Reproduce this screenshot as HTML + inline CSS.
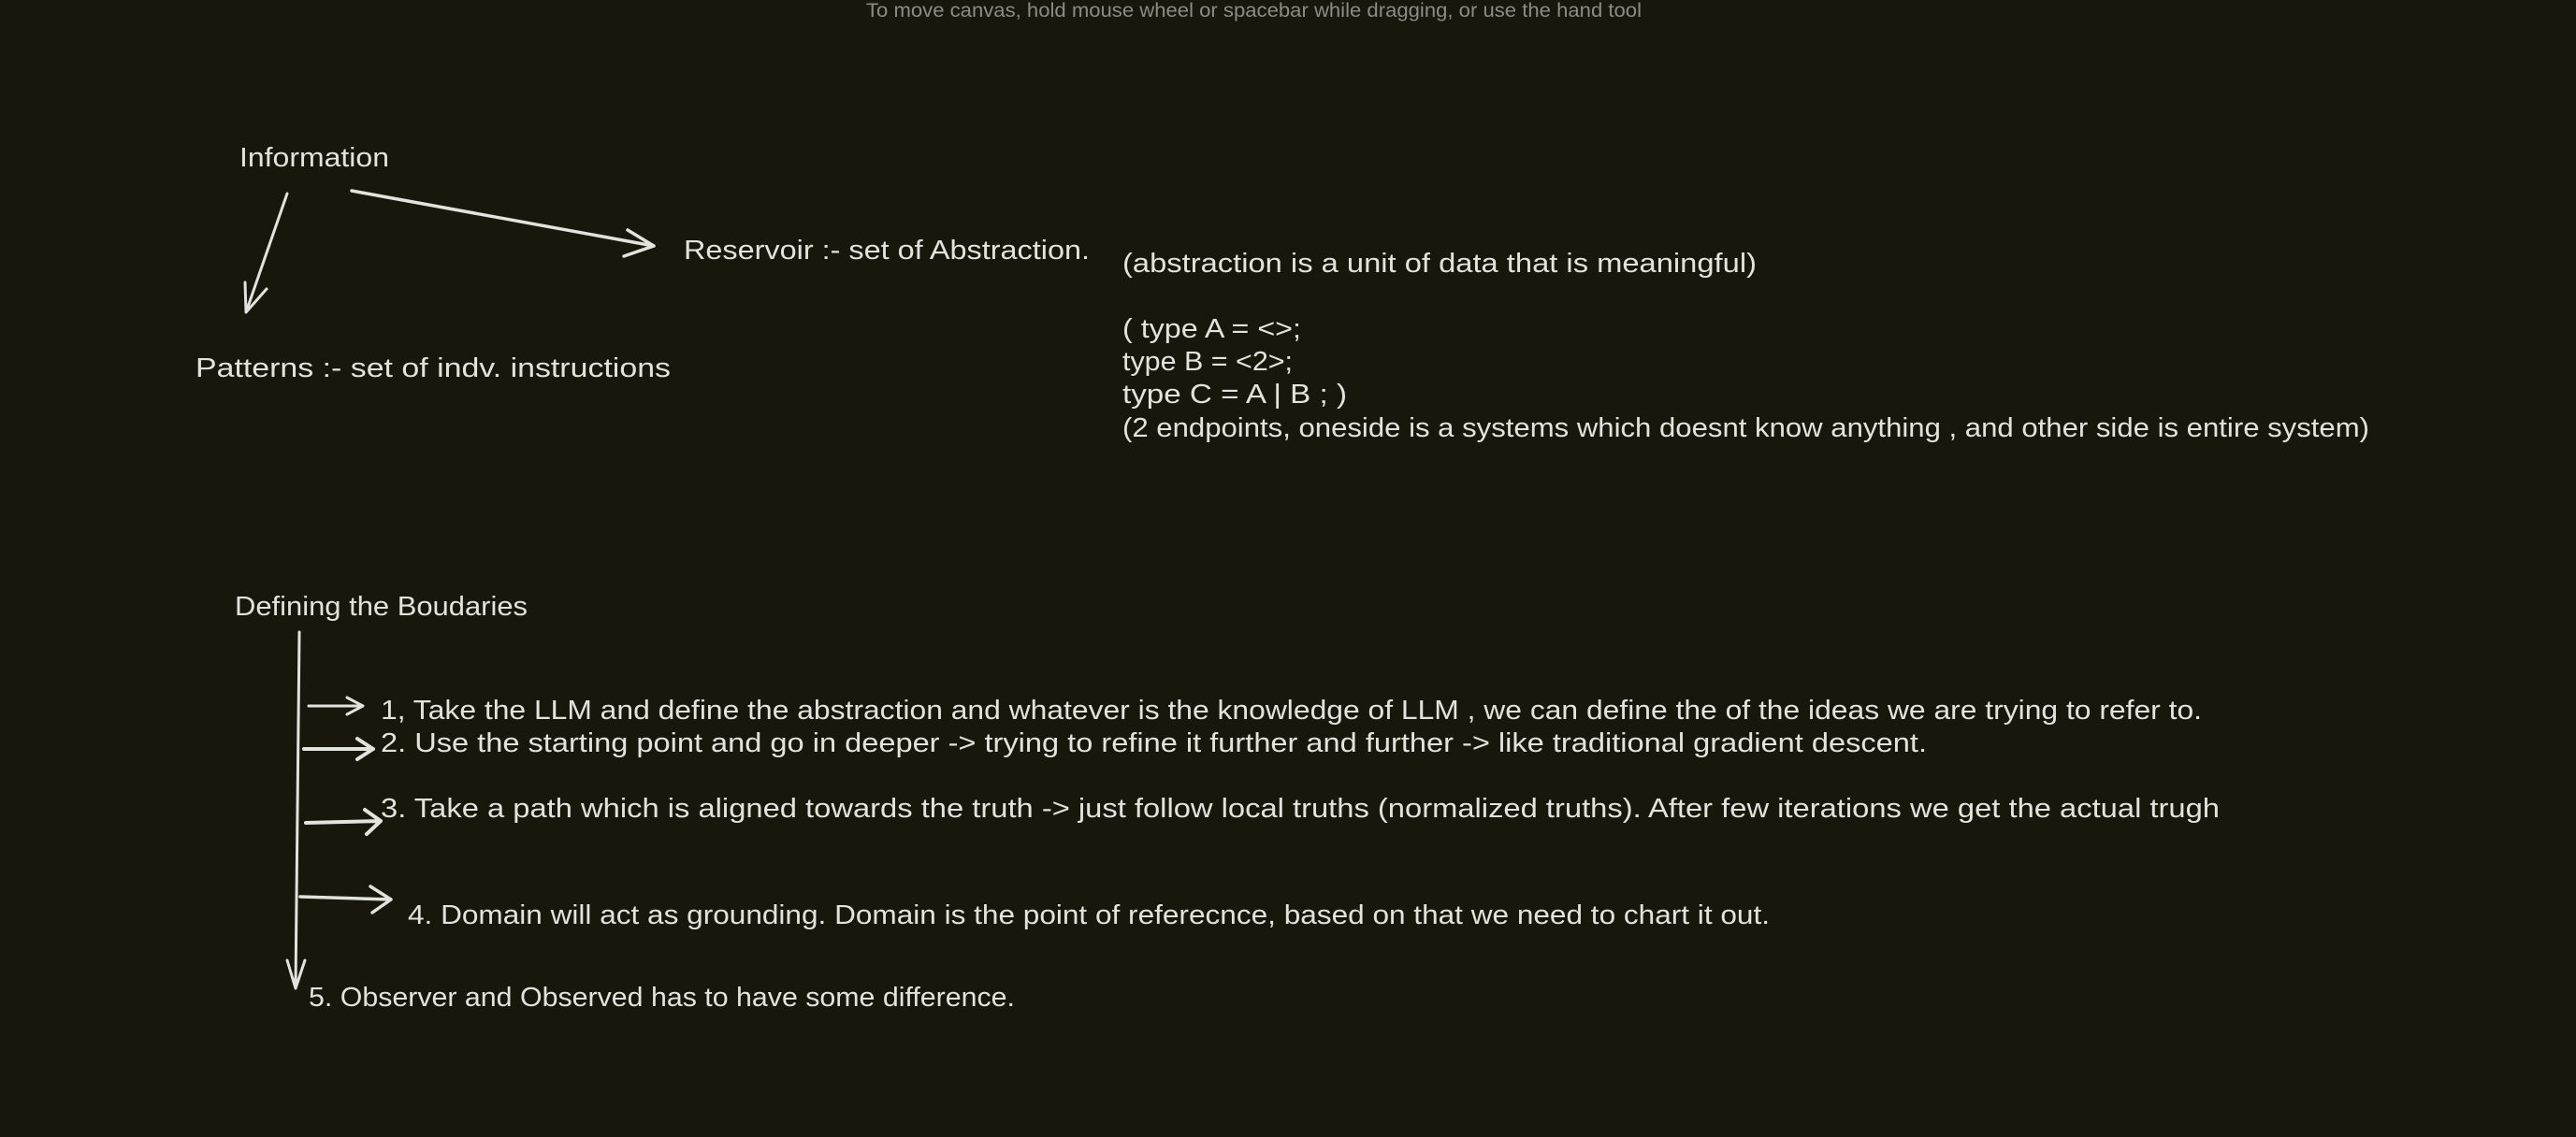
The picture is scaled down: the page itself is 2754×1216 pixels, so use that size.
<!DOCTYPE html>
<html><head><meta charset="utf-8"><style>
html,body{margin:0;padding:0;background:#19170c;overflow:hidden}
svg{display:block}
text{font-family:"Liberation Sans",sans-serif;fill:#e3e2dc;font-size:29px}
.h{fill:#8c8b84;font-size:21px}
</style></head><body>
<svg width="2754" height="1216" viewBox="0 0 2754 1216" xmlns="http://www.w3.org/2000/svg">
<rect width="2754" height="1216" fill="#19170c"/>
<text class="h" x="926" y="18" textLength="829" lengthAdjust="spacingAndGlyphs">To move canvas, hold mouse wheel or spacebar while dragging, or use the hand tool</text>

<text x="256" y="178" textLength="160" lengthAdjust="spacingAndGlyphs">Information</text>
<text x="731" y="277" textLength="434" lengthAdjust="spacingAndGlyphs">Reservoir :- set of Abstraction.</text>
<text x="209" y="403" textLength="508" lengthAdjust="spacingAndGlyphs">Patterns  :- set of indv. instructions</text>

<text x="1200" y="291" textLength="678" lengthAdjust="spacingAndGlyphs">(abstraction is a unit of data that is meaningful)</text>
<text x="1200" y="361" textLength="191" lengthAdjust="spacingAndGlyphs">( type A = &lt;&gt;;</text>
<text x="1200" y="396" textLength="182" lengthAdjust="spacingAndGlyphs">type B = &lt;2&gt;;</text>
<text x="1200" y="431" textLength="240" lengthAdjust="spacingAndGlyphs">type C = A | B ; )</text>
<text x="1200" y="467" textLength="1333" lengthAdjust="spacingAndGlyphs">(2 endpoints, oneside is a systems which doesnt know anything , and other side is entire system)</text>

<text x="251" y="658" textLength="313" lengthAdjust="spacingAndGlyphs">Defining the Boudaries</text>
<text x="407" y="769" textLength="1947" lengthAdjust="spacingAndGlyphs">1, Take the LLM and define the abstraction and whatever is the knowledge of LLM , we can define the of the ideas we are trying to refer to.</text>
<text x="407" y="804" textLength="1653" lengthAdjust="spacingAndGlyphs">2. Use the starting point and go in deeper -&gt; trying to refine it further and further -&gt; like traditional gradient descent.</text>
<text x="407" y="874" textLength="1966" lengthAdjust="spacingAndGlyphs">3. Take a path which is aligned towards the truth -&gt; just follow local truths (normalized truths). After few iterations we get the actual trugh</text>
<text x="436" y="988" textLength="1456" lengthAdjust="spacingAndGlyphs">4. Domain will act as grounding. Domain is the point of referecnce, based on that we need to chart it out.</text>
<text x="330" y="1076" textLength="755" lengthAdjust="spacingAndGlyphs">5. Observer and Observed has to have some difference.</text>

<g stroke="#e3e2dc" fill="none" stroke-linecap="round" stroke-linejoin="round" stroke-width="3">
<path d="M307 207 L263 334 M262 302 L263 334 L285 309"/>
<path d="M376 204 L699 263 M671 246 L699 263 L667 274" stroke-width="3.5"/>
<path d="M320 676 L316 1057 M307 1027 L316 1057 L326 1027"/>
<path d="M330 755 L388 755 M371 746 L388 755 L371 764"/>
<path d="M325 801 L399 801 M382 790 L399 801 L382 812" stroke-width="4"/>
<path d="M327 880 L407 878 M390 866 L407 878 L392 892" stroke-width="4"/>
<path d="M321 959 L418 962 M396 948 L418 962 L398 976" stroke-width="3.5"/>
</g>
</svg>
</body></html>
